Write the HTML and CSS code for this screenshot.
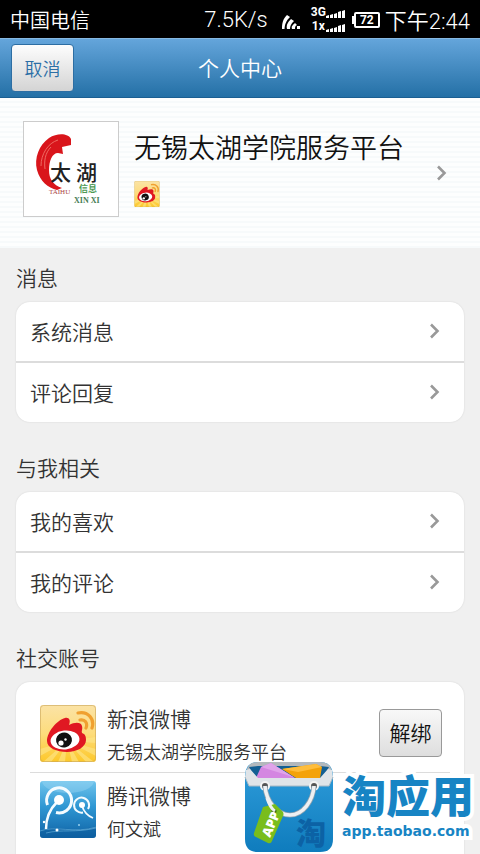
FILE: index.html
```html
<!DOCTYPE html>
<html lang="zh-CN">
<head>
    <meta charset="UTF-8">
    <meta name="viewport" content="width=device-width, initial-scale=1.0">
    <title>个人中心</title>
    <link rel="stylesheet" href="styles.css">
</head>
<body>
    <!-- Shared icons -->
    <svg class="sprite" aria-hidden="true">
        <defs>
            <linearGradient id="sunGold" x1="0" y1="0" x2="0" y2="1">
                <stop offset="0" stop-color="#fbe3a6"/>
                <stop offset="0.5" stop-color="#fddc7c"/>
                <stop offset="1" stop-color="#fdc829"/>
            </linearGradient>
            <linearGradient id="skyBlue" x1="0" y1="0" x2="0" y2="1">
                <stop offset="0" stop-color="#6fc4ec"/>
                <stop offset="0.45" stop-color="#2f97d3"/>
                <stop offset="1" stop-color="#0f63a6"/>
            </linearGradient>
            <linearGradient id="bagBlue" x1="0" y1="0" x2="0" y2="1">
                <stop offset="0" stop-color="#2f9ddb"/>
                <stop offset="1" stop-color="#0f7cbd"/>
            </linearGradient>
            <clipPath id="tile"><rect width="56" height="57" rx="3"/></clipPath>
        </defs>
        <symbol id="arrow" viewBox="0 0 12 16">
            <path d="M2 1.500l6.500 6.500L2 14.500" fill="none" stroke="#999" stroke-width="2.600"/>
        </symbol>
        <symbol id="bars" viewBox="0 0 19 9">
            <path d="M0 9V7l3-1v3zM4 9V6l3-1v4zM8 9V5l3-1v5zM12 9V3l3-1v7zM16 9V2l3-1v8z" fill="#fff"/>
        </symbol>
        <symbol id="weibo" viewBox="0 0 56 57">
            <g clip-path="url(#tile)">
                <rect width="56" height="57" fill="url(#sunGold)"/>
                <path d="M27 36L0 44v7zM27 36L3 57h8zM27 36L18 57h7zM27 36l5 21h7zM27 36l19 21h8zM27 36l29 15v-7zM27 36l29 2v-6z" fill="#fee68c" opacity="0.600"/>
            </g>
            <path d="M7 36C7 27 17 15 25 13c4-1 6 2 4 7 6-3 12-3 13 1 1 3-1 5 0 7 3 1 4 3 4 7 0 7-9 12-19 12S7 43 7 36z" fill="#e01822"/>
            <ellipse cx="25" cy="35" rx="14.500" ry="9.500" fill="#fff" transform="rotate(-6 25 35)"/>
            <ellipse cx="24" cy="35" rx="8" ry="7.500" fill="#111" transform="rotate(-15 24 35)"/>
            <circle cx="21" cy="38" r="2.600" fill="#fff"/>
            <circle cx="25.500" cy="34.500" r="1.200" fill="#fff"/>
            <path d="M40 15c5-1 8 3 6 8M38 8c10-2 17 6 14 15" fill="none" stroke="#f0a030" stroke-width="3.200" stroke-linecap="round"/>
            <rect x="0.500" y="0.500" width="55" height="56" rx="3" fill="none" stroke="#c9a55a" opacity="0.600"/>
        </symbol>
        <symbol id="tencent" viewBox="0 0 56 57">
            <g clip-path="url(#tile)">
                <rect width="56" height="57" fill="url(#skyBlue)"/>
                <ellipse cx="28" cy="0" rx="26" ry="12" fill="#a9def5" opacity="0.350"/>
                <path d="M0 50c15-7 35 3 56-5v12H0z" fill="#0b5797" opacity="0.400"/>
                <path d="M0 50c15-6 35 3 56-4M6 52c16-4 30 0 50-5" fill="none" stroke="#6db5e0" opacity="0.600"/>
                <g fill="none" stroke="#f4fbff">
                    <path d="M7.500 24A12.500 12.500 0 1 1 16 31.500" stroke-width="3"/>
                    <path d="M17 21C9 29 6 37 6 48" stroke-width="2.500"/>
                    <path d="M43 31.500A7.500 7.500 0 1 1 48 28" stroke-width="2"/>
                    <path d="M42 25c2 6 6 10 11 12" stroke-width="1.800"/>
                </g>
                <circle cx="19" cy="19" r="5" fill="#fff"/>
                <circle cx="42" cy="24" r="3" fill="#fff"/>
                <circle cx="17" cy="49" r="1.500" fill="#fff"/>
                <circle cx="4" cy="41" r="1.200" fill="#fff"/>
                <circle cx="39" cy="44" r="1" fill="#9ad0ee"/>
            </g>
        </symbol>
    </svg>

    <div class="status-bar">
        <span class="carrier">中国电信</span>
        <span class="speed">7.5K/s</span>
        <svg class="wifi" viewBox="0 0 20 16" aria-hidden="true">
            <path d="M1 15C1 9 2 5 6 1l3 2C5 7 4 10 3.500 15zM6 15c-1-4 1-7 4-10l3 2c-3 3-4 5-4 8zM11 15c-1-3 1-4 3-6l2 2c-2 1-2 2-2 4z" fill="#fff"/>
            <rect x="16" y="12" width="3" height="3" fill="#fff"/>
        </svg>
        <div class="signals">
            <div class="signal">
                <span>3G</span>
                <svg aria-hidden="true"><use href="#bars"/></svg>
            </div>
            <div class="signal">
                <span>1x</span>
                <svg aria-hidden="true"><use href="#bars"/></svg>
            </div>
        </div>
        <span class="battery">72</span>
        <span class="clock">下午2:44</span>
    </div>

    <header class="title-bar">
        <button type="button" class="cancel-btn">取消</button>
        <h1>个人中心</h1>
    </header>

    <a href="#profile" class="profile">
        <svg class="avatar" viewBox="0 0 96 96" role="img" aria-label="太湖">
            <rect x="0.500" y="0.500" width="95" height="95" fill="#fff" stroke="#ccc"/>
            <path d="M48 18c-3-6-14-6-22-1-10 7-15 20-12 32 3 11 11 18 20 20l5-2c-9-3-13-9-13-18 0-9 3-17 9-17l5 1-1-7 9-2z" fill="#d9151b"/>
            <path d="M35 19c-10 3-17 14-17 26M28 26c-6 6-7 14-6 22" fill="none" stroke="#ee6a62"/>
            <text x="27" y="59" class="avatar-name">太</text>
            <text x="53" y="59" class="avatar-name">湖</text>
            <text x="56" y="71" class="avatar-green">信息</text>
            <text x="51" y="82" class="avatar-latin">XIN XI</text>
            <text x="26" y="73" class="avatar-red">TAIHU</text>
        </svg>
        <div class="profile-info">
            <h2>无锡太湖学院服务平台</h2>
            <svg class="badge" aria-hidden="true"><use href="#weibo"/></svg>
        </div>
        <svg class="arrow" aria-hidden="true"><use href="#arrow"/></svg>
    </a>

    <main>
        <section>
            <h3>消息</h3>
            <div class="card">
                <a href="#system" class="item">系统消息<svg class="arrow" aria-hidden="true"><use href="#arrow"/></svg></a>
                <a href="#replies" class="item">评论回复<svg class="arrow" aria-hidden="true"><use href="#arrow"/></svg></a>
            </div>
        </section>

        <section>
            <h3>与我相关</h3>
            <div class="card">
                <a href="#likes" class="item">我的喜欢<svg class="arrow" aria-hidden="true"><use href="#arrow"/></svg></a>
                <a href="#comments" class="item">我的评论<svg class="arrow" aria-hidden="true"><use href="#arrow"/></svg></a>
            </div>
        </section>

        <section>
            <h3>社交账号</h3>
            <div class="card accounts">
                <div class="account">
                    <svg class="account-icon" aria-hidden="true"><use href="#weibo"/></svg>
                    <div class="account-info">
                        <h4>新浪微博</h4>
                        <p>无锡太湖学院服务平台</p>
                    </div>
                    <button type="button" class="unbind-btn">解绑</button>
                </div>
                <div class="account">
                    <svg class="account-icon" aria-hidden="true"><use href="#tencent"/></svg>
                    <div class="account-info">
                        <h4>腾讯微博</h4>
                        <p>何文斌</p>
                    </div>
                </div>
            </div>
        </section>
    </main>

    <!-- App store mark over the page -->
    <div class="store-mark">
        <svg class="bag" viewBox="0 0 90 92" aria-hidden="true">
            <path d="M1 14q1-13 13-13h62q12 0 13 13v64q0 13-13 13H14Q1 91 1 78z" fill="url(#bagBlue)"/>
            <path d="M2 12Q3 1 14 1h62q11 0 12 11l-4 6H6z" fill="#b3b8bc"/>
            <path d="M5 6l9-1h62l9 1-7 12H12z" fill="#135f93"/>
            <path d="M12 17L17 6l10-4 24 15z" fill="#d486e1"/>
            <path d="M17 6l10-4 24 15-8-3z" fill="#e0a4ea"/>
            <path d="M38 8l34-5 6 3-2 11H52z" fill="#f4a20a"/>
            <path d="M38 8l34-5 6 3-24 5z" fill="#ffbd3b"/>
            <path d="M2 9l4-1 8 9h62l8-9 4 1 1 7-4 9H5l-4-9z" fill="#dfe4e8"/>
            <path d="M1 16l4 9h80l4-9" fill="none" stroke="#a9b9c4"/>
            <text x="52" y="83" class="bag-char">淘</text>
            <g fill="#555" stroke="#f4f4f4" stroke-width="2">
                <circle cx="21" cy="25" r="4"/>
                <circle cx="70" cy="25" r="4"/>
            </g>
            <path d="M21 25c1 15 12 29 25 29s23-14 24-29" fill="none" stroke="#8da2b0" stroke-width="5"/>
            <path d="M21 25c1 15 12 29 25 29s23-14 24-29" fill="none" stroke="#eef0f2" stroke-width="3.500"/>
            <path d="M19 46l12-3 8 8q1 2 0 4L28 80q-1 3-4 2L12 76q-3-1-2-4z" fill="#79bd1c"/>
            <circle cx="30" cy="50" r="2.500" fill="#416d10"/>
            <path d="M23 37q3 10 8 13" fill="none" stroke="#eef0f2" stroke-width="3"/>
            <text x="26" y="77" class="bag-tag" transform="rotate(-67 26 77)">APP</text>
        </svg>
        <div class="store-text">
            <strong>淘应用</strong>
            <span>app.taobao.com</span>
        </div>
    </div>
</body>
</html>
```

FILE: styles.css
```css
:root {
    --text-color: #333;
    --page-color: #f0f0f0;
    --line-color: #dcdcdc;
    --store-blue: #1784c4;
}

* {
    box-sizing: border-box;
}

body {
    margin: 0;
    height: 100vh;
    overflow: hidden;
    background-color: var(--page-color);
    color: var(--text-color);
    font-family: Roboto, "Noto Sans CJK SC", sans-serif;
    font-weight: 350;
}

h1, h2, h3, h4, p {
    margin: 0;
    font-weight: 350;
}

a {
    color: inherit;
    text-decoration: none;
}

.sprite {
    position: absolute;
    width: 0;
    height: 0;
}

/* Status bar */
.status-bar {
    display: flex;
    align-items: center;
    height: 38px;
    padding: 0 10px;
    background-color: #000;
    color: #fff;
    font-size: 20px;
}

.carrier {
    margin-right: auto;
}

.speed,
.clock {
    font-size: 22px;
}

.wifi {
    width: 20px;
    height: 16px;
    margin: 5px 10px 0 13px;
}

.signals {
    display: flex;
    flex-direction: column;
    gap: 2px;
}

.signal {
    display: flex;
    align-items: flex-end;
    gap: 1px;
    height: 12px;
    font-size: 12px;
    font-weight: 700;
    line-height: 12px;
}

.signal span {
    width: 14px;
    text-align: right;
}

.signal svg {
    width: 19px;
    height: 9px;
}

.battery {
    position: relative;
    width: 26px;
    height: 16px;
    margin: 2px 5px 0 9px;
    border: 2px solid #fff;
    border-radius: 2px;
    font-size: 12px;
    font-weight: 700;
    line-height: 12px;
    text-align: center;
}

.battery::before {
    content: "";
    position: absolute;
    left: -4px;
    top: 2px;
    width: 2px;
    height: 8px;
    background-color: #fff;
}

/* Title bar */
.title-bar {
    display: grid;
    grid-template-columns: 1fr auto 1fr;
    align-items: center;
    height: 60px;
    padding: 0 11px;
    background: linear-gradient(#64a5db, #2470a6);
    border-top: 1px solid #86b8e2;
    border-bottom: 1px solid #1b5f92;
}

.title-bar h1 {
    padding-bottom: 3px;
    color: #fff;
    font-size: 21px;
}

.cancel-btn {
    justify-self: start;
    width: 63px;
    height: 48px;
    border: 1px solid #2d6ea3;
    border-radius: 4px;
    background: linear-gradient(#fdfdfd, #d4d4d4);
    color: #2c6fa6;
    font: inherit;
    font-size: 18px;
}

/* Profile */
.profile {
    display: flex;
    align-items: center;
    height: 150px;
    padding: 0 32px 0 23px;
    background: repeating-linear-gradient(#fdfefe 0 3px, #f7fafb 3px 5px);
    color: #111;
}

.avatar {
    width: 96px;
    height: 96px;
    margin-bottom: 8px;
}

.avatar-name {
    font-size: 21px;
    font-weight: 500;
    fill: #222;
}

.avatar-green {
    font-size: 9px;
    font-weight: 700;
    fill: #4c9a55;
}

.avatar-latin {
    font-family: "Liberation Serif", serif;
    font-size: 8px;
    font-weight: 700;
    fill: #467d55;
}

.avatar-red {
    font-family: "Liberation Serif", serif;
    font-size: 7px;
    fill: #a44;
}

.profile-info {
    flex: 1;
    margin-left: 15px;
}

.profile-info h2 {
    font-size: 27px;
    line-height: 36px;
}

.badge {
    display: block;
    width: 26px;
    height: 26px;
    margin: 14px 0 8px;
}

.arrow {
    width: 12px;
    height: 16px;
}

/* Lists */
main {
    padding: 0 16px;
}

h3 {
    height: 54px;
    padding-top: 15px;
    font-size: 21px;
    line-height: 32px;
}

section + section {
    padding-top: 16px;
}

.card {
    border-radius: 14px;
    background-color: #fff;
    box-shadow: 0 0 2px rgba(0, 0, 0, 0.12);
}

.item {
    display: flex;
    align-items: center;
    justify-content: space-between;
    height: 59px;
    padding: 0 23px 2px 14px;
    font-size: 21px;
}

.item + .item {
    height: 61px;
    border-top: 2px solid var(--line-color);
}

/* Social accounts */
.accounts {
    padding: 14px 14px 24px;
}

.account {
    display: flex;
    align-items: center;
    height: 76px;
    padding: 0 8px 2px 10px;
}

.account + .account {
    border-top: 1px solid var(--line-color);
}

.account-icon {
    width: 56px;
    height: 57px;
}

.account-info {
    flex: 1;
    margin-left: 11px;
    padding-top: 6px;
}

.account-info h4 {
    font-size: 21px;
    line-height: 34px;
}

.account-info p {
    font-size: 18px;
    line-height: 32px;
}

.unbind-btn {
    width: 63px;
    height: 48px;
    padding: 0 0 2px;
    border: 1px solid #999;
    border-radius: 4px;
    background: linear-gradient(#f8f8f8, #dedede);
    color: #111;
    font: inherit;
    font-size: 21px;
}

/* Store mark */
.store-mark {
    position: absolute;
    right: 6px;
    bottom: 1px;
    display: flex;
    align-items: center;
    gap: 8px;
    color: var(--store-blue);
}

.bag {
    width: 90px;
    height: 92px;
}

.bag-char {
    font-size: 30px;
    font-weight: 900;
    fill: #0c62a5;
}

.bag-tag {
    font-family: "Open Sans", sans-serif;
    font-size: 13px;
    font-weight: 800;
    fill: #fff;
}

.store-text {
    display: flex;
    flex-direction: column;
    -webkit-text-stroke: 8px #fff;
    paint-order: stroke fill;
}

.store-text strong {
    font-size: 44px;
    font-weight: 900;
    line-height: 48px;
}

.store-text span {
    font-family: "DejaVu Sans", sans-serif;
    font-size: 14px;
    font-weight: 700;
    line-height: 18px;
}
```
